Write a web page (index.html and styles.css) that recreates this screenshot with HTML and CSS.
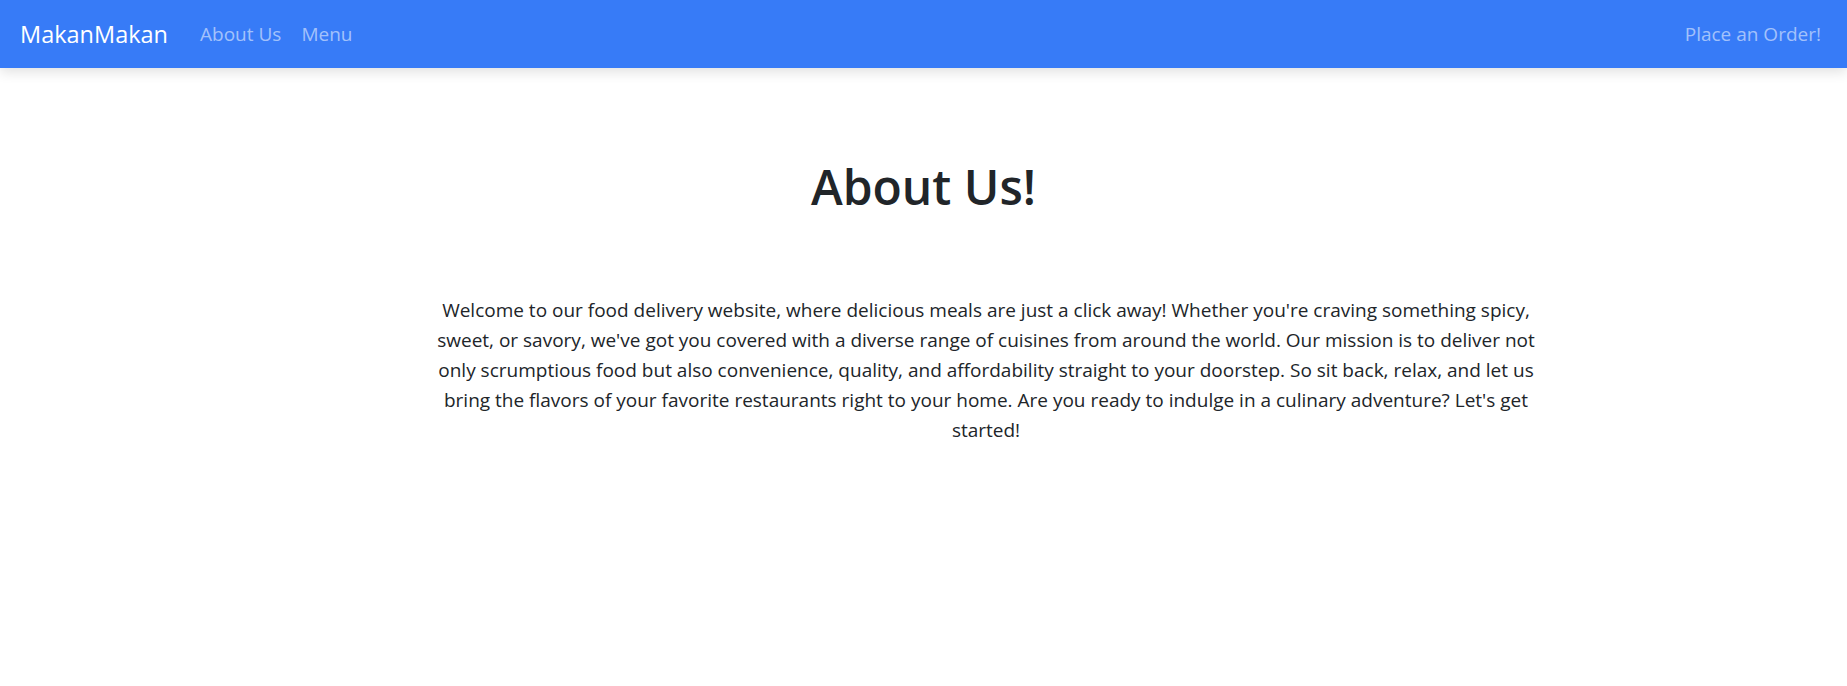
FILE: index.html
```html
<!DOCTYPE html>
<html lang="en">
<head>
<meta charset="utf-8">
<title>MakanMakan - About Us</title>
<link rel="stylesheet" href="styles.css">
</head>
<body>
<nav class="navbar">
  <a class="brand" href="#">MakanMakan</a>
  <ul class="nav-links">
    <li><a href="#">About Us</a></li>
    <li><a href="#">Menu</a></li>
  </ul>
  <a class="order-link" href="#">Place an Order!</a>
</nav>
<main class="about">
  <h1 class="about-title">About Us!</h1>
  <div class="about-body">
    <p class="about-text">Welcome to our food delivery website, where delicious meals are just a click away! Whether you're craving something spicy, sweet, or savory, we've got you covered with a diverse range of cuisines from around the world. Our mission is to deliver not only scrumptious food but also convenience, quality, and affordability straight to your doorstep. So sit back, relax, and let us bring the flavors of your favorite restaurants right to your home. Are you ready to indulge in a culinary adventure? Let's get started!</p>
  </div>
</main>
</body>
</html>
```

FILE: styles.css
```css
* { box-sizing: border-box; }

html, body {
  margin: 0;
  padding: 0;
  background: #ffffff;
  color: #212529;
  font-family: "Segoe UI", "Open Sans", "Noto Sans", sans-serif;
}

.navbar {
  display: flex;
  align-items: center;
  height: 68px;
  padding: 0 26px 0 20px;
  background: #377bf7;
  box-shadow: 0 4px 12px rgba(0, 0, 0, 0.12);
}

.navbar a { text-decoration: none; }

.brand {
  color: #ffffff;
  font-size: 23.5px;
  margin-right: 22px;
}

.nav-links {
  display: flex;
  list-style: none;
  margin: 0;
  padding: 0;
  flex: 1;
}

.nav-links a,
.order-link {
  display: block;
  padding: 8px 10px;
  font-size: 19px;
  color: rgba(255, 255, 255, 0.55);
}

.order-link { padding-right: 0; }

.about {
  padding-top: 90px;
}

.about-title {
  margin: 0;
  text-align: center;
  font-size: 48px;
  font-weight: 600;
  line-height: 1.2;
}

.about-body {
  width: 1236px;
  margin: 0 auto;
  padding-left: 125px;
  padding-top: 79px;
}

.about-text {
  margin: 0;
  text-align: center;
  font-size: 19px;
  line-height: 30px;
}
```
